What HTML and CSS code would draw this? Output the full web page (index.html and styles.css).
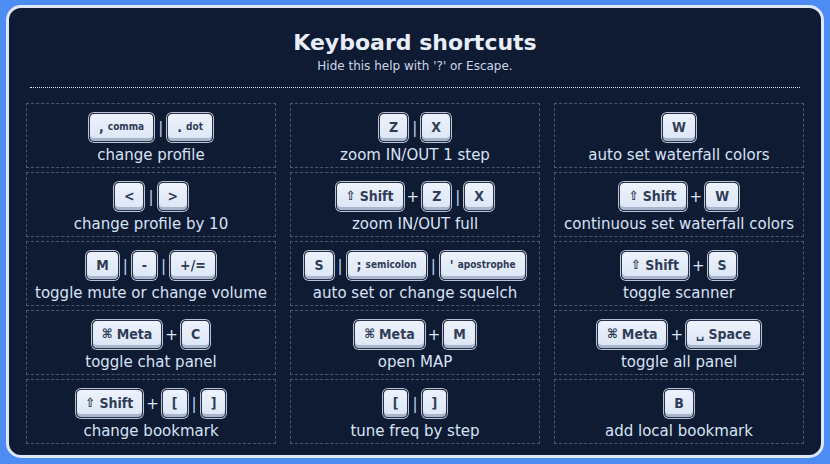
FILE: index.html
```html
<!DOCTYPE html>
<html>
<head>
<meta charset="utf-8">
<link rel="stylesheet" href="styles.css">
</head>
<body>
<div class="page">
  <div class="modal">
    <header class="head">
      <h1 class="title">Keyboard shortcuts</h1>
      <p class="sub">Hide this help with '?' or Escape.</p>
    </header>
    <hr class="rule">
    <div class="grid">
      <div class="cell">
        <div class="keys"><kbd class="key"><span class="big">,</span><span class="nm">comma</span></kbd><span class="sep">|</span><kbd class="key"><span class="big">.</span><span class="nm">dot</span></kbd></div>
        <div class="label">change profile</div>
      </div>
      <div class="cell">
        <div class="keys"><kbd class="key">Z</kbd><span class="sep">|</span><kbd class="key">X</kbd></div>
        <div class="label">zoom IN/OUT 1 step</div>
      </div>
      <div class="cell">
        <div class="keys"><kbd class="key">W</kbd></div>
        <div class="label">auto set waterfall colors</div>
      </div>

      <div class="cell">
        <div class="keys"><kbd class="key">&lt;</kbd><span class="sep">|</span><kbd class="key">&gt;</kbd></div>
        <div class="label">change profile by 10</div>
      </div>
      <div class="cell">
        <div class="keys"><kbd class="key"><span class="ic">⇧</span>Shift</kbd><span class="plus">+</span><kbd class="key">Z</kbd><span class="sep">|</span><kbd class="key">X</kbd></div>
        <div class="label">zoom IN/OUT full</div>
      </div>
      <div class="cell">
        <div class="keys"><kbd class="key"><span class="ic">⇧</span>Shift</kbd><span class="plus">+</span><kbd class="key">W</kbd></div>
        <div class="label">continuous set waterfall colors</div>
      </div>

      <div class="cell">
        <div class="keys"><kbd class="key">M</kbd><span class="sep">|</span><kbd class="key">-</kbd><span class="sep">|</span><kbd class="key">+/=</kbd></div>
        <div class="label">toggle mute or change volume</div>
      </div>
      <div class="cell">
        <div class="keys"><kbd class="key">S</kbd><span class="sep">|</span><kbd class="key"><span class="big">;</span><span class="nm">semicolon</span></kbd><span class="sep">|</span><kbd class="key"><span class="big">'</span><span class="nm">apostrophe</span></kbd></div>
        <div class="label">auto set or change squelch</div>
      </div>
      <div class="cell">
        <div class="keys"><kbd class="key"><span class="ic">⇧</span>Shift</kbd><span class="plus">+</span><kbd class="key">S</kbd></div>
        <div class="label">toggle scanner</div>
      </div>

      <div class="cell">
        <div class="keys"><kbd class="key"><span class="ic">⌘</span>Meta</kbd><span class="plus">+</span><kbd class="key">C</kbd></div>
        <div class="label">toggle chat panel</div>
      </div>
      <div class="cell">
        <div class="keys"><kbd class="key"><span class="ic">⌘</span>Meta</kbd><span class="plus">+</span><kbd class="key">M</kbd></div>
        <div class="label">open MAP</div>
      </div>
      <div class="cell">
        <div class="keys"><kbd class="key"><span class="ic">⌘</span>Meta</kbd><span class="plus">+</span><kbd class="key"><span class="ic">␣</span>Space</kbd></div>
        <div class="label">toggle all panel</div>
      </div>

      <div class="cell">
        <div class="keys"><kbd class="key"><span class="ic">⇧</span>Shift</kbd><span class="plus">+</span><kbd class="key">[</kbd><span class="sep">|</span><kbd class="key">]</kbd></div>
        <div class="label">change bookmark</div>
      </div>
      <div class="cell">
        <div class="keys"><kbd class="key">[</kbd><span class="sep">|</span><kbd class="key">]</kbd></div>
        <div class="label">tune freq by step</div>
      </div>
      <div class="cell">
        <div class="keys"><kbd class="key">B</kbd></div>
        <div class="label">add local bookmark</div>
      </div>
    </div>
  </div>
</div>
</body>
</html>
```

FILE: styles.css
```css
html, body {
  margin: 0;
  padding: 0;
}
body {
  background: #4c8cf3;
  font-family: "DejaVu Sans", sans-serif;
  width: 830px;
  height: 464px;
  overflow: hidden;
}
.page {
  padding: 5px 6px 6px 6px;
}
.modal {
  box-sizing: border-box;
  width: 818px;
  height: 453px;
  background: #0f1a33;
  border: 3px solid #dfe7f6;
  border-radius: 15px;
  padding: 22px 17px 0 17px;
}
.head {
  text-align: center;
}
.title {
  margin: 0;
  font-size: 22px;
  line-height: 26px;
  font-weight: bold;
  color: #e8eef9;
}
.sub {
  margin: 3px 0 0 0;
  font-size: 12px;
  line-height: 15px;
  color: #ccd7ea;
}
.rule {
  margin: 13px 4px 0 4px;
  border: 0;
  border-top: 1px dotted #e2e8f3;
  height: 0;
}
.grid {
  margin-top: 15px;
  display: grid;
  grid-template-columns: repeat(3, 250px);
  grid-auto-rows: 65px;
  column-gap: 14px;
  row-gap: 4px;
}
.cell {
  box-sizing: border-box;
  border: 1px dashed #4d576c;
  padding-top: 8px;
  display: flex;
  flex-direction: column;
  align-items: center;
}
.keys {
  display: flex;
  align-items: center;
  height: 31px;
}
.key {
  box-sizing: border-box;
  display: inline-flex;
  align-items: center;
  justify-content: center;
  height: 29px;
  padding: 0 9px 2px 9px;
  border: 1px solid #27324a;
  border-radius: 5px;
  box-shadow: 0 0 0 1px #b9c3d4, inset 0 -3px 0 #a9b5ca;
  background: linear-gradient(#eef3fc, #dbe5f5);
  color: #2f3c55;
  font-family: "DejaVu Sans Condensed", "DejaVu Sans", sans-serif;
  font-weight: bold;
  font-size: 14px;
  white-space: pre;
}
.key .nm {
  font-size: 10px;
  margin-left: 4px;
}
.key .ic {
  font-size: 13px;
  margin-right: 4px;
}
.sep {
  color: #c0d5f1;
  font-size: 15px;
  margin: 0 4px;
}
.plus {
  color: #dce6f6;
  font-size: 15px;
  margin: 0 3px;
}
.label {
  margin-top: 3px;
  font-size: 15px;
  line-height: 18px;
  color: #d7e3f6;
  white-space: nowrap;
}
```
